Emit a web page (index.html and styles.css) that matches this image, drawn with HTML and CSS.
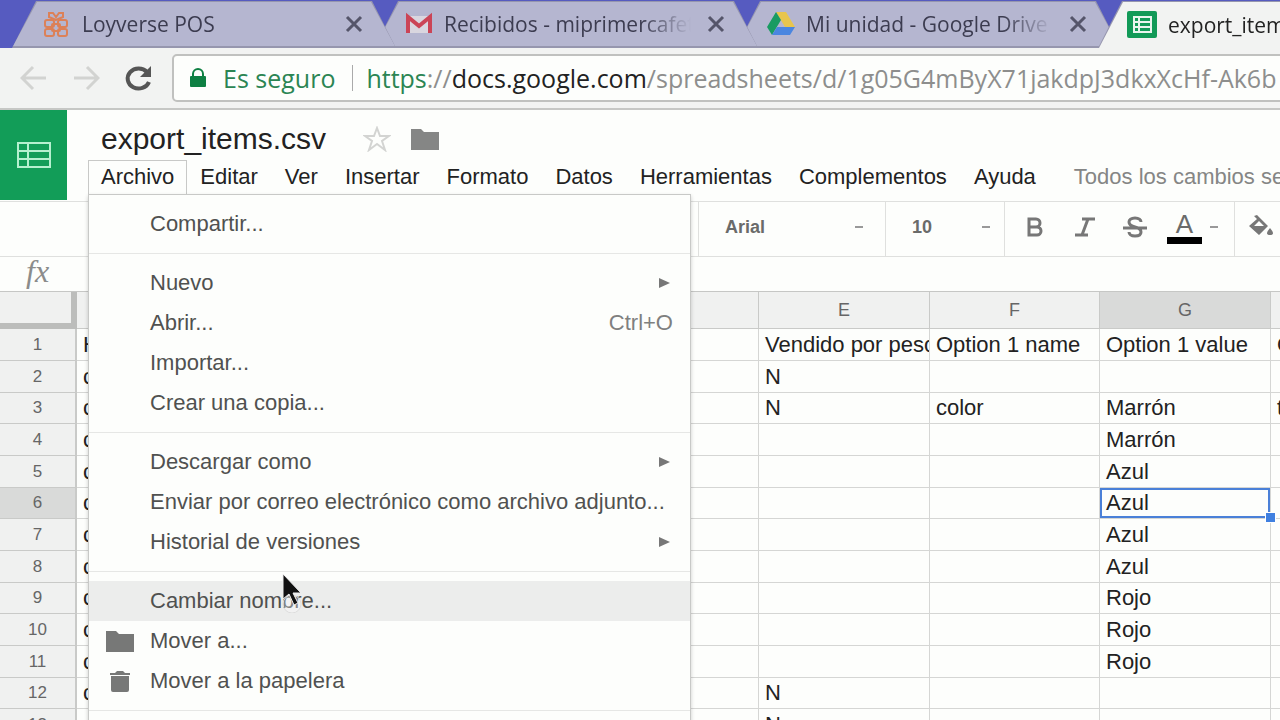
FILE: index.html
```html
<!DOCTYPE html>
<html lang="es">
<head>
    <meta charset="UTF-8">
    <meta name="viewport" content="width=device-width, initial-scale=1.0">
    <title>export_items.csv</title>
    <link rel="stylesheet" href="styles.css">
</head>
<body>
    <nav class="tabs">
        <div class="tab">
            <div class="tab-inner">
                <svg class="tab-icon" viewBox="0 0 28 28" fill="none" stroke="#dc8158" stroke-width="2">
                    <rect x="2" y="10" width="9" height="7" rx="2"/><rect x="15" y="10" width="9" height="7" rx="2"/>
                    <rect x="2" y="19" width="9" height="7" rx="2"/><rect x="15" y="19" width="9" height="7" rx="2"/>
                    <rect x="9" y="14" width="8" height="7" rx="1"/>
                    <path d="M13 10L6 7V3h4l3 4 3-4h4v4z"/>
                </svg>
                <a href="#" class="tab-title">Loyverse POS</a>
                <button class="tab-close" aria-label="Cerrar"><svg viewBox="0 0 18 18"><path d="M2 2l14 14M16 2L2 16"/></svg></button>
            </div>
        </div>
        <div class="tab">
            <div class="tab-inner">
                <svg class="tab-icon" viewBox="0 0 28 28">
                    <path d="M2 6h24v17H2z" fill="#d9d6df"/>
                    <path d="M3 23V7l11 9 11-9v16" fill="none" stroke="#cb4456" stroke-width="4"/>
                </svg>
                <a href="#" class="tab-title">Recibidos - miprimercafeteria</a>
                <button class="tab-close" aria-label="Cerrar"><svg viewBox="0 0 18 18"><path d="M2 2l14 14M16 2L2 16"/></svg></button>
            </div>
        </div>
        <div class="tab">
            <div class="tab-inner">
                <svg class="tab-icon" viewBox="0 0 28 28">
                    <path d="M9 2h10l9 15H18z" fill="#e8c54d"/>
                    <path d="M9 2l5 8L5 25l-5-8z" fill="#199b62"/>
                    <path d="M10 17h18l-5 8H5z" fill="#4a86e0"/>
                </svg>
                <a href="#" class="tab-title">Mi unidad - Google Drive</a>
                <button class="tab-close" aria-label="Cerrar"><svg viewBox="0 0 18 18"><path d="M2 2l14 14M16 2L2 16"/></svg></button>
            </div>
        </div>
        <div class="tab active">
            <div class="tab-inner">
                <svg class="tab-icon wide" viewBox="0 0 30 28">
                    <rect width="30" height="27" rx="2" fill="#129a58"/>
                    <path d="M7 6h17v15H7zM7 11h17M7 16h17M12 6v15" fill="none" stroke="#e8f5ee" stroke-width="2"/>
                </svg>
                <a href="#" class="tab-title">export_items.csv</a>
            </div>
        </div>
    </nav>

    <header class="browser-bar">
        <button class="nav-btn" aria-label="Atrás"><svg viewBox="0 0 28 28"><path d="M26 14H3M13 3L2 14l11 11"/></svg></button>
        <button class="nav-btn" aria-label="Adelante"><svg viewBox="0 0 28 28"><path d="M2 14h23M15 3l11 11-11 11"/></svg></button>
        <button class="nav-btn reload" aria-label="Recargar"><svg viewBox="0 0 28 28"><path d="M23 8a11 10 0 1 0 2 10"/><path class="head" d="M27 2v11H16z"/></svg></button>
        <div class="address">
            <svg class="lock" viewBox="0 0 16 20"><rect y="8" width="16" height="11" rx="1" fill="#0e8043"/><path d="M3 9V6a5 5 0 0 1 10 0v3" fill="none" stroke="#0e8043" stroke-width="2"/></svg>
            <span class="secure">Es seguro</span>
            <label for="url" class="origin"><span class="scheme">https</span>://<span class="host">docs.google.com</span></label>
            <input type="text" id="url" value="/spreadsheets/d/1g05G4mByX71jakdpJ3dkxXcHf-Ak6b">
        </div>
    </header>

    <section class="doc-header">
        <a href="#" class="logo" aria-label="Hojas de cálculo">
            <svg viewBox="0 0 34 26"><path d="M1 1h32v24H1zM1 9h32M1 17h32M11 1v24"/></svg>
        </a>
        <div class="doc-main">
            <div class="doc-title">
                <h1>export_items.csv</h1>
                <button class="icon-btn" aria-label="Destacar"><svg class="star" viewBox="0 0 28 26"><path d="M14 2l3 8h9l-7 5 3 9-8-6-8 6 3-9-7-5h9z"/></svg></button>
                <button class="icon-btn" aria-label="Mover a carpeta"><svg class="folder" viewBox="0 0 28 22"><path d="M0 1h10l3 3h15v18H0z"/></svg></button>
            </div>
            <div class="menubar">
                <div class="menu-holder">
                    <button class="menu-btn open">Archivo</button>
                    <ul class="dropdown">
                        <li><button>Compartir...</button></li>
                        <li class="sep"></li>
                        <li><button>Nuevo<span class="arrow"></span></button></li>
                        <li><button>Abrir...<span class="keys">Ctrl+O</span></button></li>
                        <li><button>Importar...</button></li>
                        <li><button>Crear una copia...</button></li>
                        <li class="sep"></li>
                        <li><button>Descargar como<span class="arrow"></span></button></li>
                        <li><button>Enviar por correo electrónico como archivo adjunto...</button></li>
                        <li><button>Historial de versiones<span class="arrow"></span></button></li>
                        <li class="sep"></li>
                        <li><button class="hover">Cambiar nombre...</button></li>
                        <li><button class="with-icon"><svg class="folder" viewBox="0 0 28 22"><path d="M0 1h10l3 3h15v18H0z"/></svg>Mover a...</button></li>
                        <li><button class="with-icon"><svg class="folder" viewBox="0 0 28 22"><path d="M4 3h5l2-2h6l2 2h5v2H4zM5 6h18v14q0 2-2 2H7q-2 0-2-2z"/></svg>Mover a la papelera</button></li>
                        <li class="sep"></li>
                    </ul>
                </div>
                <button class="menu-btn">Editar</button>
                <button class="menu-btn">Ver</button>
                <button class="menu-btn">Insertar</button>
                <button class="menu-btn">Formato</button>
                <button class="menu-btn">Datos</button>
                <button class="menu-btn">Herramientas</button>
                <button class="menu-btn">Complementos</button>
                <button class="menu-btn">Ayuda</button>
                <span class="status">Todos los cambios se han guardado</span>
            </div>
        </div>
    </section>

    <section class="toolbar">
        <div class="tool-start"></div>
        <div class="group">
            <select class="font-name" aria-label="Fuente"><option>Arial</option></select><i class="dash"></i>
        </div>
        <div class="group">
            <select class="font-size" aria-label="Tamaño"><option>10</option></select><i class="dash"></i>
        </div>
        <div class="group format">
            <button aria-label="Negrita"><svg viewBox="0 0 24 24"><path d="M6 4h7a4 4 0 0 1 0 8H6zM6 12h8a4 4 0 0 1 0 8H6z"/></svg></button>
            <button aria-label="Cursiva"><svg viewBox="0 0 24 24"><path d="M9 4h13M2 20h13M15 4L9 20"/></svg></button>
            <button aria-label="Tachado"><svg viewBox="0 0 24 24"><path d="M18 7c0-2-2-4-6-4s-6 2-6 4 2 4 6 5 6 2 6 5-2 4-6 4-6-2-6-4M0 13h24"/></svg></button>
            <button class="text-color" aria-label="Color de texto">A</button>
            <i class="dash"></i>
        </div>
        <div class="group">
            <button class="fill" aria-label="Color de relleno"><svg viewBox="0 0 26 24"><path d="M8 0l11 11-9 9-10-9 8-7-3-3zM5 11h10l-5-5z" fill-rule="evenodd"/><path d="M21 13q6 7 0 7t0-7z"/></svg></button>
        </div>
    </section>

    <div class="formula"><span class="fx">fx</span></div>

    <main class="sheet">
        <table>
            <thead>
                <tr><th class="corner"></th><th>A</th><th>B</th><th>C</th><th>D</th><th>E</th><th>F</th><th class="on">G</th><th>H</th></tr>
            </thead>
            <tbody>
                <tr><th>1</th><td>Handle</td><td></td><td></td><td></td><td>Vendido por peso</td><td>Option 1 name</td><td>Option 1 value</td><td>Option 2 name</td></tr>
                <tr><th>2</th><td>cafe</td><td></td><td></td><td></td><td>N</td><td></td><td></td><td></td></tr>
                <tr><th>3</th><td>camisa</td><td></td><td></td><td></td><td>N</td><td>color</td><td>Marrón</td><td>talla</td></tr>
                <tr><th>4</th><td>camisa</td><td></td><td></td><td></td><td></td><td></td><td>Marrón</td><td></td></tr>
                <tr><th>5</th><td>camisa</td><td></td><td></td><td></td><td></td><td></td><td>Azul</td><td></td></tr>
                <tr><th class="on">6</th><td>camisa</td><td></td><td></td><td></td><td></td><td></td><td class="selected">Azul<i class="handle"></i></td><td></td></tr>
                <tr><th>7</th><td>camisa</td><td></td><td></td><td></td><td></td><td></td><td>Azul</td><td></td></tr>
                <tr><th>8</th><td>camisa</td><td></td><td></td><td></td><td></td><td></td><td>Azul</td><td></td></tr>
                <tr><th>9</th><td>camisa</td><td></td><td></td><td></td><td></td><td></td><td>Rojo</td><td></td></tr>
                <tr><th>10</th><td>camisa</td><td></td><td></td><td></td><td></td><td></td><td>Rojo</td><td></td></tr>
                <tr><th>11</th><td>camisa</td><td></td><td></td><td></td><td></td><td></td><td>Rojo</td><td></td></tr>
                <tr><th>12</th><td>cafe</td><td></td><td></td><td></td><td>N</td><td></td><td></td><td></td></tr>
                <tr><th>13</th><td>cafe</td><td></td><td></td><td></td><td>N</td><td></td><td></td><td></td></tr>
            </tbody>
        </table>
    </main>

    <!-- mouse pointer -->
    <svg class="pointer" viewBox="0 0 24 40">
        <circle cx="10" cy="31" r="9" fill="#fff" fill-opacity="0.3" stroke="#ddd"/>
        <path d="M1 1v25l6-5 5 11 4-2-5-10h8z" fill="#111" stroke="#eee"/>
    </svg>
</body>
</html>
```

FILE: styles.css
```css
* {
    box-sizing: border-box;
}

body {
    margin: 0;
    height: 100vh;
    overflow: hidden;
    display: flex;
    flex-direction: column;
    font-family: "Liberation Sans", Arial, sans-serif;
    font-size: 22px;
    color: #222;
    background-color: #fdfefc;
}

button, select, input {
    font: inherit;
    color: inherit;
    border: none;
    outline: none;
    padding: 0;
    margin: 0;
    background: none;
}

a {
    color: inherit;
    text-decoration: none;
}

svg {
    display: block;
    flex-shrink: 0;
}

/* browser tabs */
.tabs {
    display: flex;
    flex-shrink: 0;
    height: 48px;
    padding: 1px 0 0 12px;
    overflow: hidden;
    background-color: #565bc0;
    font-family: "Open Sans", "Noto Sans", sans-serif;
    font-size: 21px;
}

.tab {
    flex: 0 0 384px;
    min-width: 0;
    margin-right: -22px;
    padding: 1px 1px 2px;
    background-color: #9696ae;
    clip-path: polygon(24px 0, calc(100% - 24px) 0, 100% 100%, 0 100%);
}

.tab:nth-child(1) { z-index: 3; }
.tab:nth-child(2) { z-index: 2; }
.tab:nth-child(3) { z-index: 1; }

.tab-inner {
    display: flex;
    align-items: center;
    height: 100%;
    padding: 0 32px 0 30px;
    background-color: #b5b6d0;
    color: #3c3c50;
    clip-path: polygon(24px 0, calc(100% - 24px) 0, 100% 100%, 0 100%);
}

.tab.active {
    z-index: 4;
    padding-bottom: 0;
}

.tab.active .tab-inner {
    padding-left: 28px;
    background-color: #f2f3f2;
    color: #222;
}

.tab-icon {
    width: 28px;
    height: 28px;
    margin-right: 11px;
}

.tab-icon.wide {
    width: 30px;
}

.tab-title {
    flex: 1;
    min-width: 0;
    margin-right: 16px;
    overflow: hidden;
    white-space: nowrap;
    -webkit-mask-image: linear-gradient(to left, transparent, #000 50px);
    mask-image: linear-gradient(to left, transparent, #000 50px);
}

.tab-close svg {
    width: 18px;
    height: 18px;
    fill: none;
    stroke: #55556a;
    stroke-width: 3;
}

/* address bar */
.browser-bar {
    display: flex;
    flex-shrink: 0;
    align-items: center;
    height: 62px;
    padding-left: 20px;
    overflow: hidden;
    border-bottom: 2px solid #c6c7c5;
    background-color: #f2f3f2;
    font-family: "Open Sans", "Noto Sans", sans-serif;
    font-size: 25px;
}

.nav-btn {
    margin-right: 24px;
}

.nav-btn svg {
    width: 28px;
    height: 28px;
    fill: none;
    stroke: #d2d3d1;
    stroke-width: 3;
}

.nav-btn.reload {
    margin-right: 20px;
}

.nav-btn.reload svg {
    stroke: #555;
    stroke-width: 4;
}

.nav-btn .head {
    fill: #555;
    stroke: none;
}

.address {
    display: flex;
    flex: 1;
    align-items: center;
    height: 48px;
    margin-right: -10px;
    padding-left: 16px;
    overflow: hidden;
    border: 2px solid #c0c1bf;
    border-radius: 5px;
    background-color: #fdfefc;
    color: #8d8e8d;
    white-space: nowrap;
}

.lock {
    width: 16px;
    height: 20px;
    margin-right: 17px;
}

.secure {
    padding-right: 17px;
    margin-right: 13px;
    line-height: 26px;
    border-right: 1px solid #aaa;
    color: #2b8553;
}

.scheme {
    color: #2b8553;
}

.host {
    color: #222;
}

.address input {
    flex: 1;
    min-width: 0;
}

/* document header */
.doc-header {
    display: flex;
    flex-shrink: 0;
    height: 91px;
}

.logo {
    display: flex;
    align-items: center;
    justify-content: center;
    width: 67px;
    height: 90px;
    margin-right: 21px;
    background-color: #129d58;
}

.logo svg {
    width: 34px;
    height: 26px;
    fill: none;
    stroke: #b5f0cf;
    stroke-width: 2;
}

.doc-main {
    flex: 1;
    min-width: 0;
}

.doc-title {
    display: flex;
    align-items: center;
    height: 50px;
    padding: 8px 0 0 13px;
}

h1 {
    margin: 0 37px 0 0;
    font-size: 30px;
    font-weight: normal;
}

.icon-btn {
    margin-right: 20px;
}

.star {
    width: 28px;
    height: 26px;
    fill: none;
    stroke: #d3d4d2;
    stroke-width: 2;
}

.folder {
    width: 28px;
    height: 22px;
    fill: #858685;
}

.menubar {
    display: flex;
    white-space: nowrap;
}

.menu-holder {
    position: relative;
}

.menu-btn {
    height: 34px;
    padding: 0 13px 2px 12px;
    border: 1px solid transparent;
    border-bottom: none;
}

.menu-btn.open {
    padding: 0 12px 2px;
    border-color: #c8c9c7;
}

.status {
    padding-left: 24px;
    line-height: 34px;
    color: #858685;
}

.dropdown {
    position: absolute;
    top: 100%;
    left: 0;
    z-index: 10;
    width: 603px;
    margin: 0;
    padding: 9px 0 20px;
    list-style: none;
    border: 1px solid #c8c9c7;
    background-color: #fdfefc;
    box-shadow: 0 2px 4px rgba(0, 0, 0, 0.2);
}

.dropdown button {
    display: flex;
    align-items: center;
    width: 100%;
    height: 40px;
    padding: 0 17px 0 61px;
    color: #505150;
}

.dropdown .hover {
    background-color: #ecedec;
}

.dropdown .with-icon {
    gap: 16px;
    padding-left: 17px;
}

.dropdown .folder {
    fill: #777877;
}

.dropdown .sep {
    height: 1px;
    margin: 9px 0;
    background-color: #e6e7e5;
}

.arrow {
    margin: 0 3px 0 auto;
    border: 5px solid transparent;
    border-left: 11px solid #777;
    border-right: none;
}

.keys {
    margin-left: auto;
    color: #7f807f;
}

/* toolbar */
.toolbar {
    display: flex;
    flex-shrink: 0;
    height: 56px;
    overflow: hidden;
    border: 1px solid #dfe0de;
    border-width: 1px 0;
    color: #6a6b6a;
}

.tool-start {
    flex: 0 0 698px;
}

.group {
    display: flex;
    align-items: center;
    padding: 0 22px 4px 26px;
    border-left: 1px solid #dfe0de;
}

.group select {
    appearance: none;
    font-size: 18px;
    font-weight: bold;
}

.font-name {
    width: 130px;
}

.font-size {
    width: 70px;
}

.group:nth-child(3) {
    padding-right: 14px;
}

.dash {
    width: 8px;
    height: 2px;
    background-color: #999;
}

.format {
    gap: 26px;
    padding: 0 16px 4px 18px;
}

.format svg {
    width: 24px;
    height: 24px;
    fill: none;
    stroke: #777;
    stroke-width: 3;
}

.text-color {
    width: 35px;
    margin-left: -6px;
    font-size: 26px;
    line-height: 26px;
    border-bottom: 7px solid #000;
}

.format .dash {
    margin-left: -18px;
}

.fill svg {
    width: 26px;
    height: 24px;
    fill: #777;
}

.group:last-child {
    padding-left: 14px;
}

.formula {
    flex-shrink: 0;
    height: 34px;
    padding-left: 26px;
}

.fx {
    font: italic 32px/28px "Liberation Serif", serif;
    color: #8b8c8b;
}

/* spreadsheet grid */
.sheet {
    flex: 1;
    overflow: hidden;
    border-top: 1px solid #c6c7c5;
}

table {
    table-layout: fixed;
    width: 1441px;
    border-spacing: 0;
}

th {
    width: 171px;
    height: 32px;
    padding: 0;
    font-size: 18px;
    font-weight: normal;
    color: #666;
    border: 1px solid #c9cac8;
    border-width: 0 1px 1px 0;
    background-color: #f0f1f0;
}

th:nth-child(odd) {
    width: 170px;
}

thead th {
    height: 37px;
}

tbody th {
    font-size: 17px;
    border-right: 2px solid #c9cac8;
}

th.corner {
    width: 77px;
    border: 6px solid #bcbdbb;
    border-width: 0 6px 6px 0;
}

th.on {
    background-color: #d9dad9;
}

td {
    height: 32px;
    padding: 0 6px;
    line-height: 30px;
    overflow: hidden;
    white-space: nowrap;
    border: 1px solid #d5d6d4;
    border-width: 0 1px 1px 0;
}

tbody tr:nth-child(3n) > * {
    height: 31px;
}

td.selected {
    position: relative;
    overflow: visible;
    box-shadow: inset 0 0 0 2px #4a80d8;
}

.handle {
    position: absolute;
    right: -6px;
    bottom: -5px;
    width: 11px;
    height: 11px;
    border: 1px solid #fff;
    background-color: #4080e0;
}

.pointer {
    position: absolute;
    top: 573px;
    left: 282px;
    z-index: 20;
    width: 24px;
    height: 40px;
}
```
